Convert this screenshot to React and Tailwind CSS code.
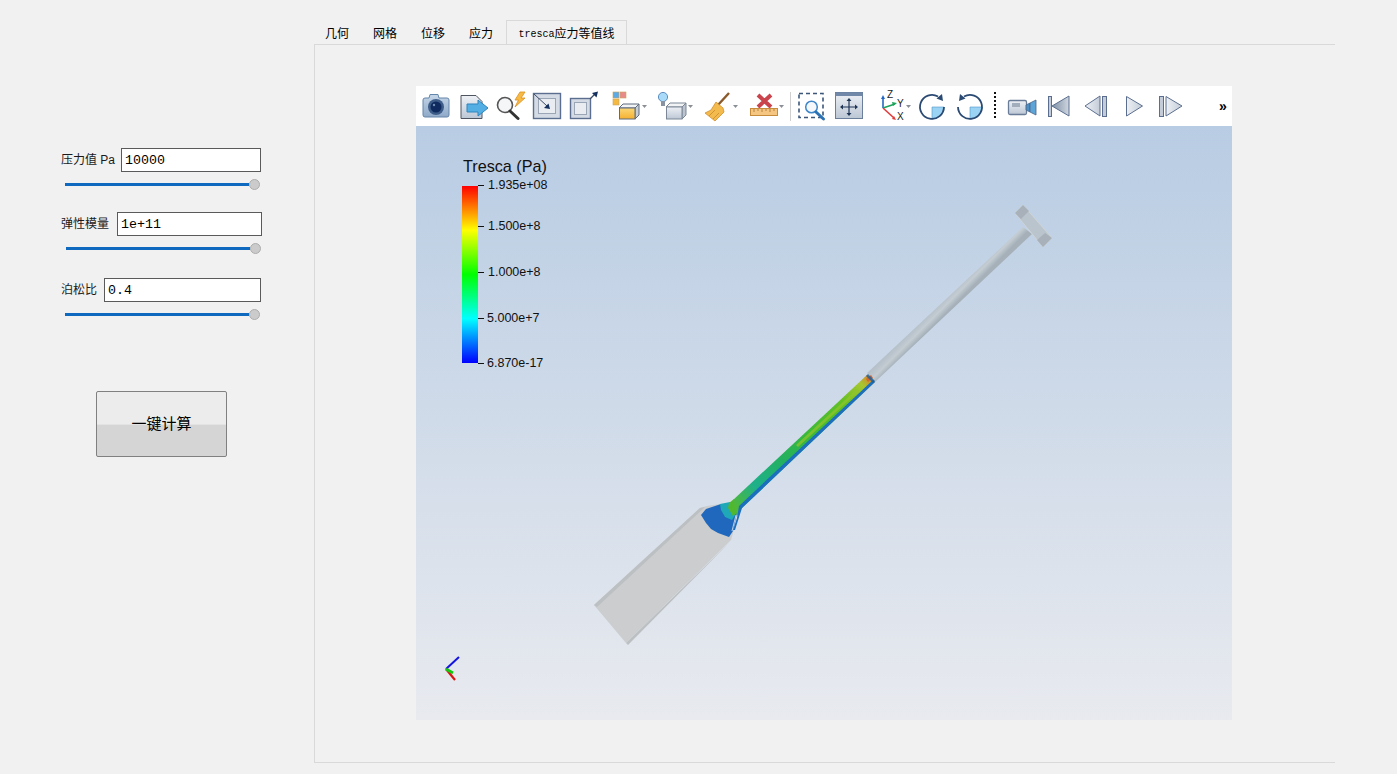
import React from 'react';

const cjk = 'font-["Liberation_Sans","Noto_Sans_CJK_SC",sans-serif]';

function Field({ label, value, labelClass, pad, inputClass, sliderClass, top }) {
  return (
    <div className={top}>
      <div className={`flex items-center ${pad}`}>
        <span className={`text-[12px] text-[#1a1a1a] ${labelClass}`}>{label}</span>
        <input
          readOnly
          value={value}
          className={`h-[24px] border border-[#5a5a5a] bg-white pl-[3px] text-[13.3px] text-black outline-none font-["Liberation_Mono",monospace] ${inputClass}`}
        />
      </div>
      <div className={`mt-[7px] flex h-[11px] w-[195px] items-center ${sliderClass}`}>
        <div className="h-[3px] flex-1 bg-[#0f69bf]" />
        <div className="h-[11px] w-[11px] rounded-full border border-[#adadad] bg-[#cbcbcb]" />
      </div>
    </div>
  );
}

function Tool({ x, w, children }) {
  return (
    <svg width={w} height={40} viewBox={`${x} 86 ${w} 40`} className="shrink-0">
      {children}
    </svg>
  );
}

const Caret = ({ x }) => <path d={`M${x} 105h5l-2.5 3z`} fill="#8a8f96" />;

function Toolbar() {
  return (
    <div className="flex h-[40px] items-center bg-white">
      <svg width="0" height="0" className="absolute">
        <defs>
          <linearGradient id="gSteel" x1="0" y1="0" x2="0" y2="1">
            <stop offset="0" stopColor="#eef1f5" />
            <stop offset="1" stopColor="#bcc7d5" />
          </linearGradient>
          <linearGradient id="gCam" x1="0" y1="0" x2="0" y2="1">
            <stop offset="0" stopColor="#c5d6e8" />
            <stop offset="1" stopColor="#8ea9c8" />
          </linearGradient>
          <linearGradient id="gGold" x1="0" y1="0" x2="0" y2="1">
            <stop offset="0" stopColor="#fbd777" />
            <stop offset="1" stopColor="#f5b02f" />
          </linearGradient>
          <linearGradient id="gTri" x1="0" y1="0" x2="1" y2="0">
            <stop offset="0" stopColor="#7f90a6" />
            <stop offset="1" stopColor="#cfd6df" />
          </linearGradient>
          <linearGradient id="gTriL" x1="0" y1="0" x2="1" y2="0">
            <stop offset="0" stopColor="#eef1f5" />
            <stop offset="1" stopColor="#c3ccd8" />
          </linearGradient>
        </defs>
      </svg>

      <Tool x={416} w={39}>
        <path d="M425 98h4l1-3.5h8l1 3.5h8a2 2 0 0 1 2 2v15a2 2 0 0 1-2 2h-22a2 2 0 0 1-2-2v-15a2 2 0 0 1 2-2z" fill="url(#gCam)" stroke="#6485aa" />
        <circle cx="436" cy="107" r="8" fill="#3d5c88" />
        <circle cx="436" cy="107" r="5.5" fill="#0f2a5e" />
        <circle cx="434" cy="105" r="1.2" fill="#6d8db5" />
      </Tool>
      <Tool x={455} w={37}>
        <path d="M461 95.5h15l6 6v17h-21z" fill="url(#gSteel)" stroke="#4e5560" />
        <path d="M467 104h11v-4l10 8-10 8v-4h-11z" fill="#53afe3" stroke="#2e84bd" />
      </Tool>
      <Tool x={492} w={36}>
        <circle cx="505" cy="105" r="7.5" fill="#f4f6f8" stroke="#555" strokeWidth="1.6" />
        <path d="M510 111l8 7.5" stroke="#333" strokeWidth="3" strokeLinecap="round" />
        <path d="M520 92h5l-4 6h4l-10 9 3.5-7h-3.5z" fill="#f7bb45" stroke="#dc8f20" strokeWidth="0.8" />
      </Tool>
      <Tool x={528} w={38}>
        <rect x="533.5" y="93.5" width="27" height="25" fill="#d5dbe4" stroke="#5b6e8f" strokeWidth="1.4" />
        <rect x="538.5" y="98.5" width="17" height="15" fill="#e9ecf1" stroke="#9aa6b6" />
        <path d="M534 94l13 12" stroke="#3a4b68" strokeWidth="1" />
        <path d="M550 109l-6-1 4.5-4.5z" fill="#14305e" />
      </Tool>
      <Tool x={566} w={38}>
        <rect x="570.5" y="98.5" width="20" height="20" fill="#d5dbe4" stroke="#5b6e8f" strokeWidth="1.4" />
        <rect x="574.5" y="102.5" width="12" height="12" fill="#e9ecf1" stroke="#9aa6b6" />
        <path d="M590 99l5-5" stroke="#3a4b68" strokeWidth="1.2" />
        <path d="M598 91.5l-1.5 6-4.5-4.5z" fill="#14305e" />
      </Tool>
      <Tool x={604} w={46}>
        <rect x="613" y="92" width="6" height="6" fill="#5aaae8" stroke="#c9a35a" strokeWidth="0.6" />
        <rect x="620" y="92" width="6" height="6" fill="#e88a8a" stroke="#c9a35a" strokeWidth="0.6" />
        <rect x="613" y="99" width="6" height="6" fill="#f5b942" stroke="#c9a35a" strokeWidth="0.6" />
        <path d="M619 108l4-4h16l-4 4z" fill="#f2f3f5" stroke="#5e6b7d" />
        <path d="M635 108l4-4v11l-4 4z" fill="#c7ced8" stroke="#5e6b7d" />
        <rect x="619.5" y="108" width="15.5" height="11" fill="url(#gGold)" stroke="#5e6b7d" />
        <Caret x={642} />
      </Tool>
      <Tool x={650} w={46}>
        <circle cx="663" cy="97" r="4.6" fill="#a9daf7" stroke="#5c8fc0" />
        <rect x="661" y="101" width="4" height="5" fill="#8793a3" />
        <path d="M666 107l4-4h16l-4 4z" fill="#f2f3f5" stroke="#7b8796" />
        <path d="M682 107l4-4v12l-4 4z" fill="#bac3ce" stroke="#7b8796" />
        <rect x="666.5" y="107" width="15.5" height="12" fill="url(#gSteel)" stroke="#7b8796" />
        <Caret x={688} />
      </Tool>
      <Tool x={696} w={48}>
        <path d="M729 93l-11 12" stroke="#8b5a2b" strokeWidth="2.4" />
        <path d="M716 102l7 6 1 4-9 9-10-8 6-3z" fill="#f3bb4e" stroke="#d28f2c" strokeWidth="0.8" />
        <path d="M709 116l6-6M713 119l6-6" stroke="#c98a2b" strokeWidth="0.8" />
        <Caret x={733} />
      </Tool>
      <Tool x={744} w={44}>
        <path d="M758 95l13 12M771 95l-13 12" stroke="#c9444c" strokeWidth="4" />
        <rect x="750.5" y="108.5" width="27" height="7" fill="#f5c682" stroke="#c78b3c" />
        <path d="M754 109v3M758 109v2M762 109v3M766 109v2M770 109v3M774 109v2" stroke="#a8722c" strokeWidth="0.8" />
        <Caret x={779} />
      </Tool>
      <Tool x={788} w={6}>
        <path d="M790.5 92v29" stroke="#d0d0d0" />
      </Tool>
      <Tool x={794} w={36}>
        <rect x="799" y="93.5" width="24" height="24" fill="none" stroke="#3b5679" strokeWidth="1.6" strokeDasharray="4 3" />
        <circle cx="811.5" cy="107" r="5.8" fill="#f4f8fb" stroke="#3f86c9" strokeWidth="1.5" />
        <path d="M816 112l7.5 7" stroke="#2a71b5" strokeWidth="3" strokeLinecap="round" />
      </Tool>
      <Tool x={830} w={38}>
        <rect x="835.5" y="92.5" width="27" height="26" fill="url(#gSteel)" stroke="#6b7f9c" />
        <rect x="835.5" y="92.5" width="27" height="3.5" fill="#7188a9" />
        <path d="M849 100v14M842 107h14" stroke="#1f3556" strokeWidth="1.2" />
        <path d="M849 98l2.5 3h-5zM849 116l2.5-3h-5zM840 107l3-2.5v5zM858 107l-3-2.5v5z" fill="#1f3556" />
      </Tool>
      <Tool x={868} w={46}>
        <path d="M883 108V98" stroke="#2468c4" strokeWidth="1.6" />
        <path d="M883 95l2 4h-4z" fill="#2468c4" />
        <path d="M883 108l12-4" stroke="#1ea35a" strokeWidth="1.6" />
        <path d="M897 103l-4 3-1-4z" fill="#1ea35a" />
        <path d="M883 108l11 10" stroke="#e23a3a" strokeWidth="1.6" />
        <path d="M896 120l-4-1 2-3z" fill="#e23a3a" />
        <text x="887" y="98" fontSize="10" fill="#222" fontFamily="Liberation Sans, sans-serif">Z</text>
        <text x="897" y="107" fontSize="10" fill="#222" fontFamily="Liberation Sans, sans-serif">Y</text>
        <text x="897" y="120" fontSize="10" fill="#222" fontFamily="Liberation Sans, sans-serif">X</text>
        <Caret x={906} />
      </Tool>
      <Tool x={914} w={36}>
        <path d="M932 107h12a12 12 0 0 1-12 12z" fill="#9ad3f3" stroke="#4d94c9" strokeWidth="0.6" />
        <path d="M938 96.5A12 12 0 1 0 944 107" fill="none" stroke="#2b4a73" strokeWidth="1.8" />
        <path d="M942 94l1 7-6.5-2.5z" fill="#2b4a73" />
      </Tool>
      <Tool x={950} w={40}>
        <path d="M970 107h12a12 12 0 0 1-12 12z" fill="#9ad3f3" stroke="#4d94c9" strokeWidth="0.6" />
        <path d="M964 96.5A12 12 0 1 1 958 107" fill="none" stroke="#2b4a73" strokeWidth="1.8" />
        <path d="M960 94l-1 7 6.5-2.5z" fill="#2b4a73" />
      </Tool>
      <Tool x={990} w={10}>
        <path d="M995 92v27" stroke="#111" strokeWidth="2" strokeDasharray="2 2" />
      </Tool>
      <Tool x={1000} w={42}>
        <rect x="1008.5" y="100.5" width="18" height="14" rx="1.5" fill="url(#gSteel)" stroke="#6a7d98" strokeWidth="1.3" />
        <rect x="1012" y="103" width="8" height="4" fill="#a3aebd" />
        <path d="M1026 105l4-2v9l-4-2z" fill="#4c8fc4" stroke="#4d6385" strokeWidth="0.8" />
        <path d="M1030 103l6-3v15l-6-3z" fill="#5da5d8" stroke="#4d6385" strokeWidth="0.8" />
      </Tool>
      <Tool x={1042} w={34}>
        <rect x="1048.5" y="96.5" width="3" height="20" fill="#c3ccd8" stroke="#5b6e8f" />
        <path d="M1052 106l17-10v20z" fill="url(#gTri)" stroke="#5b6e8f" />
      </Tool>
      <Tool x={1076} w={40}>
        <path d="M1085 106l15-10v20z" fill="url(#gTriL)" stroke="#5b6e8f" />
        <rect x="1102.5" y="96.5" width="4" height="20" fill="#c3ccd8" stroke="#5b6e8f" />
      </Tool>
      <Tool x={1116} w={36}>
        <path d="M1126.5 96.5l16 9.5-16 10z" fill="url(#gTriL)" stroke="#5b6e8f" />
      </Tool>
      <Tool x={1152} w={40}>
        <rect x="1159.5" y="96.5" width="4" height="20" fill="#c3ccd8" stroke="#5b6e8f" />
        <path d="M1166 96.5l16 9.5-16 10z" fill="url(#gTriL)" stroke="#5b6e8f" />
      </Tool>
      <span className='ml-[27px] text-[14px] font-bold leading-none text-black font-["Liberation_Sans",sans-serif]'>»</span>
    </div>
  );
}

const labels = [
  ['1.935e+08', 185, 488],
  ['1.500e+8', 226, 488],
  ['1.000e+8', 272, 488],
  ['5.000e+7', 318, 487],
  ['6.870e-17', 363, 487],
];

function Scene() {
  return (
    <svg viewBox="416 126 816 594" className="h-[594px] w-[816px]">
      <defs>
        <linearGradient id="rainbow" x1="0" y1="1" x2="0" y2="0">
          <stop offset="0" stopColor="#0000ff" />
          <stop offset="0.25" stopColor="#00ffff" />
          <stop offset="0.5" stopColor="#00ff00" />
          <stop offset="0.75" stopColor="#ffff00" />
          <stop offset="1" stopColor="#ff0000" />
        </linearGradient>
        <linearGradient id="stress" gradientUnits="userSpaceOnUse" x1="735" y1="505" x2="871" y2="378">
          <stop offset="0" stopColor="#4fb83a" />
          <stop offset="0.15" stopColor="#1fb08a" />
          <stop offset="0.35" stopColor="#22b060" />
          <stop offset="0.55" stopColor="#3cb93a" />
          <stop offset="0.8" stopColor="#62c024" />
          <stop offset="0.94" stopColor="#a8c62e" />
          <stop offset="1" stopColor="#d9822c" />
        </linearGradient>
        <linearGradient id="handle" gradientUnits="userSpaceOnUse" x1="945" y1="298" x2="953" y2="306">
          <stop offset="0" stopColor="#b6c1ca" />
          <stop offset="0.5" stopColor="#c4ccd2" />
          <stop offset="1" stopColor="#a5b0b9" />
        </linearGradient>
      </defs>

      {/* legend */}
      <text x="463" y="172" fontSize="16.2" fill="#111" fontFamily="Liberation Sans, sans-serif">Tresca (Pa)</text>
      <rect x="462" y="186" width="16" height="177" fill="url(#rainbow)" />
      {labels.map(([t, y, x]) => (
        <g key={t}>
          <path d={`M478 ${y + 0.5}h6`} stroke="#111" />
          <text x={x} y={y + 3.5} fontSize="12.5" fill="#111" fontFamily="Liberation Sans, sans-serif">{t}</text>
        </g>
      ))}

      {/* handle and t-head */}
      <path d="M867 373L1023 227l9 7L875 382z" fill="url(#handle)" />
      <path d="M1015 213l8-8 29 33-9 9z" fill="#bac4cc" stroke="#d8d8d2" strokeWidth="0.6" />
      <path d="M1015 213l8-8 6 6-8 8zM1037 240l8-7 7 5-9 9z" fill="#a8b1b9" />

      {/* blade */}
      <path d="M594 605L700 508l7-2 13-2 17 9-4 20-2 7-3 3L626 643z" fill="#cbcdcf" />
      <path d="M594 605L700 508l5-1-108 100zM626 643L729 543l3-3-104 105z" fill="#bcc0c2" />

      {/* neck and stressed section */}
      <path d="M706 509l15-5 16 9-4 18-4 6-11-4-7-4-5-6-5-8z" fill="#1f68bd" />
      <path d="M720 504l10-2 7 10-5 8-7-3-4-7z" fill="#1fa8b8" />
      <path d="M729 503l5-4 5 6-1 7-5 4-5-8z" fill="#4fb82e" />
      <path d="M733 500L867 375 875 382 742 508 737 516z" fill="url(#stress)" />
      <path d="M875 382L742 508 735 530 733 530 737 518 739 506 873 380z" fill="#1c6fbf" />
      <path d="M797 446L858 390" stroke="#93c62a" strokeWidth="3" opacity="0.7" />
      <path d="M866 379l5-4 2 3-5 4z" fill="#d9672b" />
      <path d="M868 374l7 7-2 2-7-7z" fill="#175f9e" opacity="0.8" />
      <path d="M732 531l4-16" stroke="#e6eef2" strokeWidth="0.8" fill="none" />

      {/* orientation axes */}
      <path d="M446 669l13-12" stroke="#1414e0" strokeWidth="2" />
      <path d="M446 669l9 11" stroke="#d81414" strokeWidth="2.2" />
      <path d="M446 669l7 4" stroke="#14c814" strokeWidth="3" />
    </svg>
  );
}

export default function App() {
  const tabs = ['几何', '网格', '位移', '应力'];
  return (
    <div className={`flex h-[774px] w-[1397px] overflow-hidden bg-[#f1f1f1] ${cjk}`}>
      <aside className="w-[314px] shrink-0 pt-[148px]">
        <Field label="压力值 Pa" value="10000" pad="pl-[61px]" labelClass="w-[60px]" inputClass="w-[140px]" sliderClass="ml-[65px]" />
        <Field label="弹性模量" value="1e+11" top="mt-[22px]" pad="pl-[61px]" labelClass="w-[56px]" inputClass="w-[145px]" sliderClass="ml-[66px]" />
        <Field label="泊松比" value="0.4" top="mt-[24px]" pad="pl-[61px]" labelClass="w-[43px]" inputClass="w-[157px]" sliderClass="ml-[65px]" />
        <button className="ml-[96px] mt-[71px] h-[66px] w-[131px] rounded-[2px] border border-[#808080] bg-[linear-gradient(#ececec_0,#ececec_50%,#d5d5d5_52%,#d5d5d5_100%)] text-[15px] text-black">
          一键计算
        </button>
      </aside>

      <main className="flex w-[1021px] flex-col pt-[20px]">
        <div className="flex h-[24px] items-stretch">
          {tabs.map((t) => (
            <div key={t} className="flex w-[48px] items-center justify-center pr-[2px] pt-[3px] text-[12px] text-black">
              {t}
            </div>
          ))}
          <div className="flex w-[121px] items-center justify-center border border-b-0 border-[#d9d9d9] pt-[3px] text-[12px] text-black">
            <span className='text-[10px] font-["Liberation_Mono",monospace]'>tresca</span>
            应力等值线
          </div>
        </div>
        <div className="h-[719px] border-b border-l border-t border-[#d9d9d9] pl-[101px] pt-[41px]">
          <div className="h-[634px] w-[816px]">
            <Toolbar />
            <div className="h-[594px] bg-[linear-gradient(#b8cce3,#e8eaef)]">
              <Scene />
            </div>
          </div>
        </div>
      </main>
    </div>
  );
}
